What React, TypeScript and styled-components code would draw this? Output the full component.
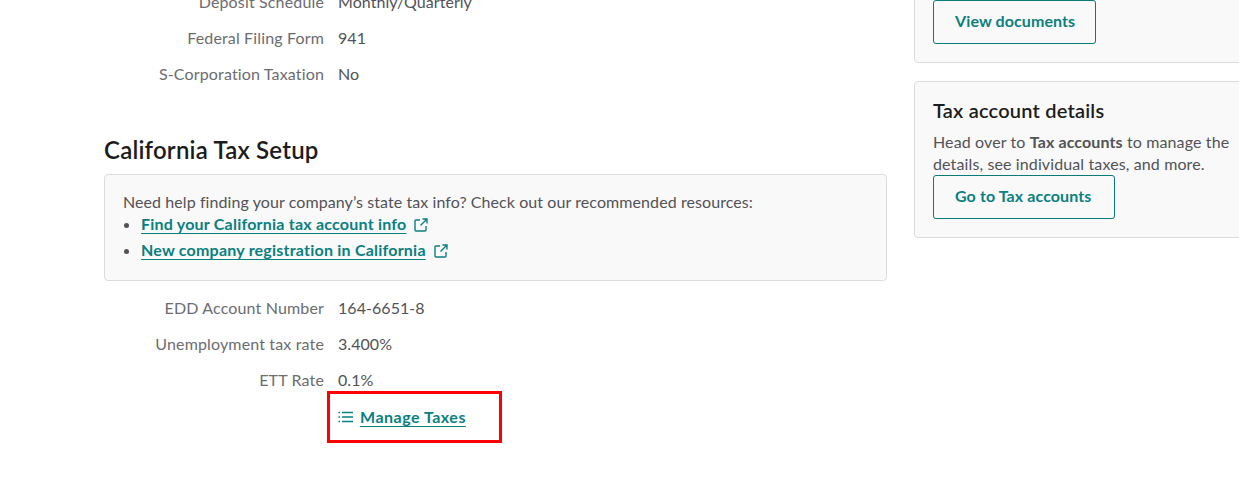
import React from "react";
import styled, { createGlobalStyle } from "styled-components";

const Global = createGlobalStyle`
  html, body { margin: 0; padding: 0; background: #fff; overflow: hidden; }
  body { font-family: Lato, "Noto Sans", sans-serif; font-size: 16px; letter-spacing: 0.08px; color: #525257; }
`;

const Page = styled.div`
  width: 1239px;
  height: 496px;
  overflow: hidden;
`;
const Columns = styled.div`
  display: grid;
  grid-template-columns: 783px 340px;
  column-gap: 27px;
  margin: -16px 0 0 104px;
`;
const Main = styled.main`
  display: flex;
  flex-direction: column;
`;
const Row = styled.div`
  display: grid;
  grid-template-columns: 220px 1fr;
  column-gap: 14px;
  height: 36px;
  line-height: 35px;
`;
const Label = styled.div`
  text-align: right;
  color: #6c6c72;
  white-space: nowrap;
  letter-spacing: 0.15px;
`;
const Value = styled.div`
  color: #525257;
  letter-spacing: 0.05px;
`;
const SectionTitle = styled.h2`
  margin: 40px 0 0;
  font-size: 24px;
  line-height: 36px;
  font-weight: 600;
  letter-spacing: 0.2px;
  color: #1c1c1c;
`;
const HelpBox = styled.div`
  box-sizing: border-box;
  height: 107px;
  margin: 6px 0 9px;
  padding: 16px 18px;
  background: #f9f9f9;
  border: 1px solid #dcdcdc;
  border-radius: 4px;
  line-height: 22px;
`;
const LinkList = styled.ul`
  margin: 0;
  padding: 0 0 0 18px;
`;
const LinkItem = styled.li`
  margin-bottom: 4px;
  &::marker { color: #525257; }
`;
const TextLink = styled.a`
  color: #0a8080;
  font-weight: 700;
  letter-spacing: 0.22px;
  text-decoration: underline;
  text-underline-offset: 3px;
`;
const ActionLink = styled(TextLink)`
  letter-spacing: 0.5px;
`;
const ExternalIcon = styled.svg`
  width: 14px;
  height: 14px;
  margin-left: 8px;
  vertical-align: -2px;
  fill: none;
  stroke: #0a8080;
  stroke-width: 1.4;
`;
const ActionRow = styled.div`
  position: relative;
  display: flex;
  align-items: center;
  height: 36px;
  margin-left: 234px;
  gap: 7px;
`;
const ListIcon = styled.svg`
  width: 15px;
  height: 12px;
  margin-top: 2px;
  fill: none;
  stroke: #0a8080;
  stroke-width: 1.3;
`;
const Highlight = styled.div`
  position: absolute;
  left: -11px;
  top: -7px;
  width: 175px;
  height: 52px;
  box-sizing: border-box;
  border: 3px solid #f00;
`;
const Aside = styled.aside`
  display: flex;
  flex-direction: column;
  gap: 18px;
  margin-top: -21px;
`;
const Card = styled.section<{ $h: number }>`
  box-sizing: border-box;
  height: ${(p) => p.$h}px;
  padding: 16px 18px 18px;
  background: #f9f9f9;
  border: 1px solid #dcdcdc;
  border-radius: 4px;
  display: flex;
  flex-direction: column;
  justify-content: flex-end;
  align-items: flex-start;
`;
const CardTitle = styled.h3`
  margin: 0 0 9px;
  font-size: 20px;
  line-height: 24px;
  font-weight: 600;
  letter-spacing: 0.2px;
  color: #1c1c1c;
`;
const CardText = styled.p`
  margin: 0;
  line-height: 22px;
  width: 304px;
  letter-spacing: 0.12px;
  b { font-weight: 700; color: #525257; }
`;
const Button = styled.button<{ $w: number }>`
  box-sizing: border-box;
  flex: 0 0 44px;
  width: ${(p) => p.$w}px;
  background: transparent;
  border: 1px solid #0a7a7a;
  border-radius: 3px;
  color: #0a8080;
  font: 700 16px Lato, sans-serif;
  letter-spacing: 0.1px;
  text-align: left;
  padding: 0 0 3px 21px;
`;

const Ext = () => (
  <ExternalIcon viewBox="0 0 14 14">
    <path d="M6 2H2a1 1 0 0 0-1 1v9a1 1 0 0 0 1 1h9a1 1 0 0 0 1-1V8" />
    <path d="M8.5 1H13V5.5M13 1L6.5 7.5" />
  </ExternalIcon>
);

const rowsTop = [
  ["Deposit Schedule", "Monthly/Quarterly"],
  ["Federal Filing Form", "941"],
  ["S-Corporation Taxation", "No"],
];
const rowsBottom = [
  ["EDD Account Number", "164-6651-8"],
  ["Unemployment tax rate", "3.400%"],
  ["ETT Rate", "0.1%"],
];

export default function App() {
  return (
    <Page>
      <Global />
      <Columns>
        <Main>
          {rowsTop.map(([l, v]) => (
            <Row key={l}><Label>{l}</Label><Value>{v}</Value></Row>
          ))}
          <SectionTitle>California Tax Setup</SectionTitle>
          <HelpBox>
            Need help finding your company’s state tax info? Check out our recommended resources:
            <LinkList>
              <LinkItem><TextLink href="#">Find your California tax account info</TextLink><Ext /></LinkItem>
              <LinkItem><TextLink href="#">New company registration in California</TextLink><Ext /></LinkItem>
            </LinkList>
          </HelpBox>
          {rowsBottom.map(([l, v]) => (
            <Row key={l}><Label>{l}</Label><Value>{v}</Value></Row>
          ))}
          <ActionRow>
            <ListIcon viewBox="0 0 15 12">
              <path d="M4 1.5H15M4 6H15M4 10.5H15M0.5 1.5H2M0.5 6H2M0.5 10.5H2" />
            </ListIcon>
            <ActionLink href="#">Manage Taxes</ActionLink>
            <Highlight />
          </ActionRow>
        </Main>
        <Aside>
          <Card $h={100}>
            <Button $w={163}>View documents</Button>
          </Card>
          <Card $h={157}>
            <CardTitle>Tax account details</CardTitle>
            <CardText>Head over to <b>Tax accounts</b> to manage the details, see individual taxes, and more.</CardText>
            <Button $w={182}>Go to Tax accounts</Button>
          </Card>
        </Aside>
      </Columns>
    </Page>
  );
}
